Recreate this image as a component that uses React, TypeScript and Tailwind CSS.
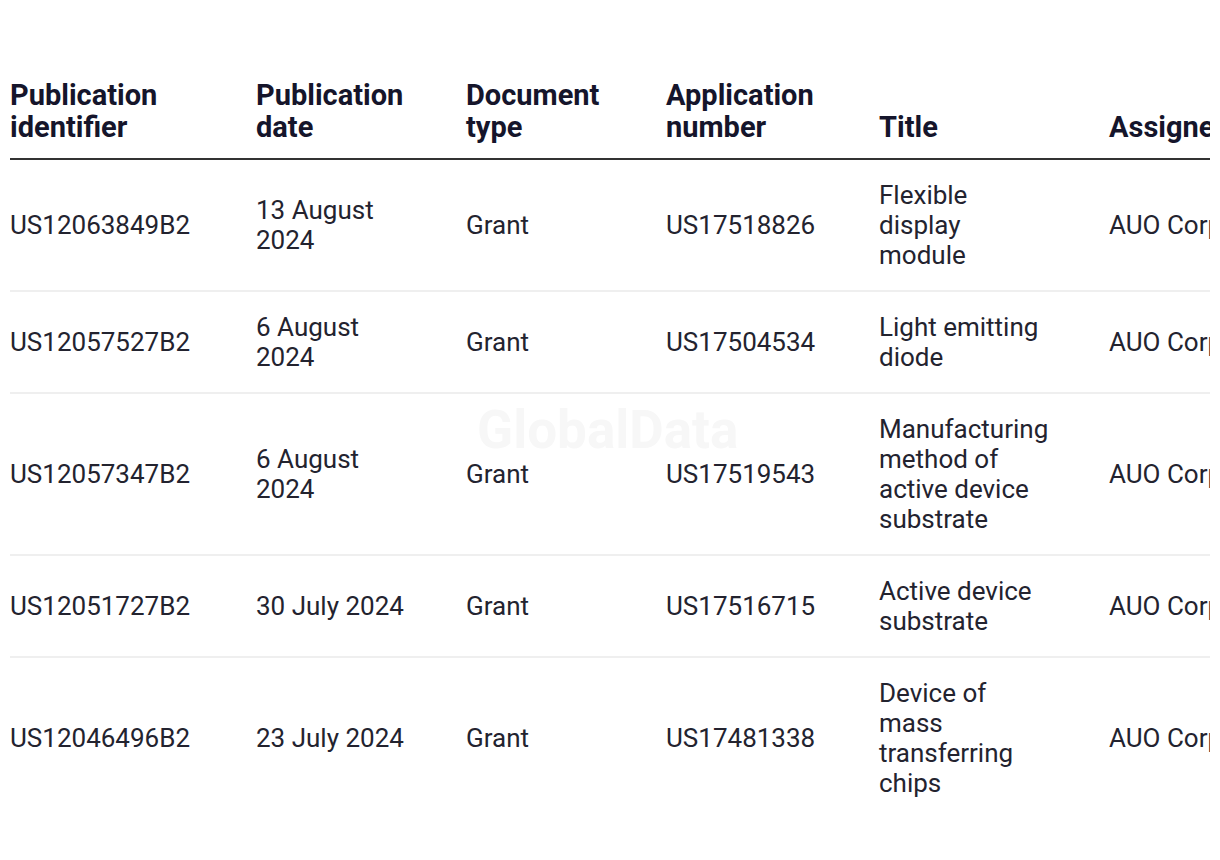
const rows = [
  { id: "US12063849B2", date: "13 August 2024", type: "Grant", app: "US17518826", title: "Flexible display module", assignee: "AUO Corporation" },
  { id: "US12057527B2", date: "6 August 2024", type: "Grant", app: "US17504534", title: "Light emitting diode", assignee: "AUO Corporation" },
  { id: "US12057347B2", date: "6 August 2024", type: "Grant", app: "US17519543", title: "Manufacturing method of active device substrate", assignee: "AUO Corporation" },
  { id: "US12051727B2", date: "30 July 2024", type: "Grant", app: "US17516715", title: "Active device substrate", assignee: "AUO Corporation" },
  { id: "US12046496B2", date: "23 July 2024", type: "Grant", app: "US17481338", title: "Device of mass transferring chips", assignee: "AUO Corporation" },
];

const headers = ["Publication identifier", "Publication date", "Document type", "Application number", "Title", "Assignee"];

export default function App() {
  return (
    <div className="w-[1220px] h-[860px] bg-white px-[10px] pt-[79px] font-['Roboto',sans-serif] relative overflow-hidden">
      {/* watermark */}
      <div className="absolute left-[477px] top-[400px] text-[53px] leading-[60px] font-bold text-[#f7f7f7] select-none pointer-events-none">GlobalData</div>
      <div className="w-[1200px] overflow-hidden relative">
        <table className="table-fixed border-collapse w-[1400px]">
          <colgroup>
            <col className="w-[246px]" />
            <col className="w-[210px]" />
            <col className="w-[200px]" />
            <col className="w-[213px]" />
            <col className="w-[230px]" />
            <col className="w-[301px]" />
          </colgroup>
          <thead>
            <tr className="border-b-2 border-[#333333]">
              {headers.map((h) => (
                <th key={h} className="text-left align-bottom pb-[15px] pr-[40px] text-[29px] leading-[32px] font-bold text-[#15152b]">
                  {h}
                </th>
              ))}
            </tr>
          </thead>
          <tbody>
            {rows.map((r, i) => (
              <tr key={r.id} className={i < rows.length - 1 ? "border-b-2 border-[#efefef]" : ""}>
                <td className="py-[20px] pr-[40px] align-middle text-[26px] leading-[30px] text-[#23232f]">{r.id}</td>
                <td className="py-[20px] pr-[44px] align-middle text-[26px] leading-[30px] text-[#23232f]">{r.date}</td>
                <td className="py-[20px] pr-[40px] align-middle text-[26px] leading-[30px] text-[#23232f]">{r.type}</td>
                <td className="py-[20px] pr-[40px] align-middle text-[26px] leading-[30px] text-[#23232f]">{r.app}</td>
                <td className="py-[20px] pr-[60px] align-middle text-[26px] leading-[30px] text-[#23232f]">{r.title}</td>
                <td className="py-[20px] pr-[40px] align-middle text-[26px] leading-[30px] text-[#23232f] whitespace-nowrap">{r.assignee}</td>
              </tr>
            ))}
          </tbody>
        </table>
      </div>
    </div>
  );
}
